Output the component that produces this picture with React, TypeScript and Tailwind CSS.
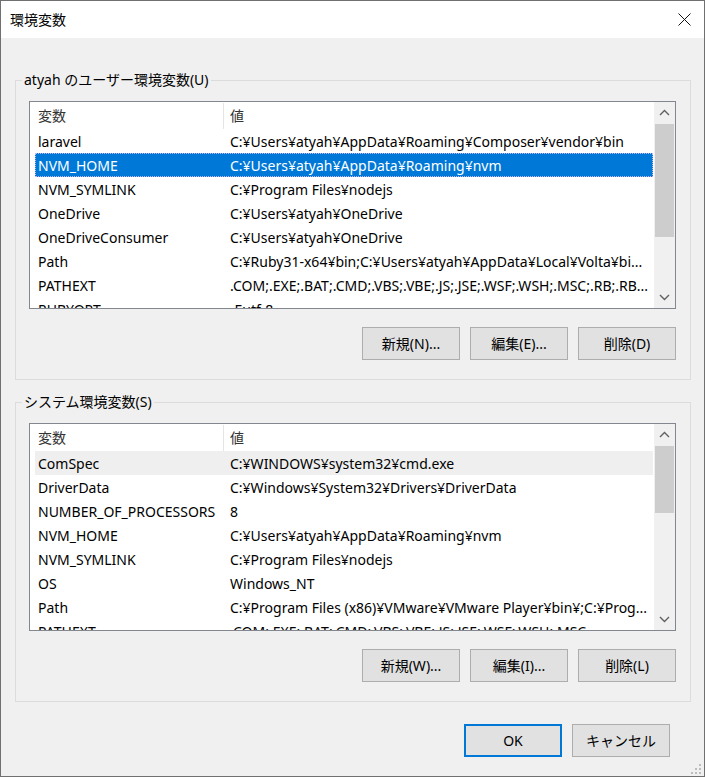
type Row = { name: string; value: string; state?: "selected" | "inactive" };

const userRows: Row[] = [
  { name: "laravel", value: "C:¥Users¥atyah¥AppData¥Roaming¥Composer¥vendor¥bin" },
  { name: "NVM_HOME", value: "C:¥Users¥atyah¥AppData¥Roaming¥nvm", state: "selected" },
  { name: "NVM_SYMLINK", value: "C:¥Program Files¥nodejs" },
  { name: "OneDrive", value: "C:¥Users¥atyah¥OneDrive" },
  { name: "OneDriveConsumer", value: "C:¥Users¥atyah¥OneDrive" },
  { name: "Path", value: "C:¥Ruby31-x64¥bin;C:¥Users¥atyah¥AppData¥Local¥Volta¥bi..." },
  { name: "PATHEXT", value: ".COM;.EXE;.BAT;.CMD;.VBS;.VBE;.JS;.JSE;.WSF;.WSH;.MSC;.RB;.RB..." },
  { name: "RUBYOPT", value: "-Eutf-8" },
];

const systemRows: Row[] = [
  { name: "ComSpec", value: "C:¥WINDOWS¥system32¥cmd.exe", state: "inactive" },
  { name: "DriverData", value: "C:¥Windows¥System32¥Drivers¥DriverData" },
  { name: "NUMBER_OF_PROCESSORS", value: "8" },
  { name: "NVM_HOME", value: "C:¥Users¥atyah¥AppData¥Roaming¥nvm" },
  { name: "NVM_SYMLINK", value: "C:¥Program Files¥nodejs" },
  { name: "OS", value: "Windows_NT" },
  { name: "Path", value: "C:¥Program Files (x86)¥VMware¥VMware Player¥bin¥;C:¥Prog..." },
  { name: "PATHEXT", value: ".COM;.EXE;.BAT;.CMD;.VBS;.VBE;.JS;.JSE;.WSF;.WSH;.MSC" },
];

function Chevron({ up }: { up?: boolean }) {
  return (
    <svg width="11" height="7" viewBox="0 0 11 7" fill="none">
      <polyline
        points={up ? "1,6 5.5,1.5 10,6" : "1,1 5.5,5.5 10,1"}
        stroke="#606060"
        strokeWidth="1.4"
      />
    </svg>
  );
}

function ScrollBar({ thumbClass }: { thumbClass: string }) {
  return (
    <div className="flex w-[21px] shrink-0 flex-col bg-[#f0f0f0]">
      <div className="flex h-[21px] shrink-0 items-center justify-center">
        <Chevron up />
      </div>
      <div className="flex-1">
        <div className={thumbClass} />
      </div>
      <div className="flex h-[21px] shrink-0 items-center justify-center">
        <Chevron />
      </div>
    </div>
  );
}

function ListRow({ row }: { row: Row }) {
  const base =
    row.state === "selected"
      ? "flex h-[24px] shrink-0 items-center bg-[#0078d7] text-white outline outline-1 outline-dotted outline-[#c8b8f0] -outline-offset-1"
      : row.state === "inactive"
        ? "flex h-[24px] shrink-0 items-center bg-[#efefef] text-black"
        : "flex h-[24px] shrink-0 items-center text-black";
  return (
    <div className={base}>
      <div className="w-[192px] shrink-0 overflow-hidden whitespace-nowrap pl-[3px]">{row.name}</div>
      <div className="min-w-0 flex-1 overflow-hidden whitespace-nowrap pl-[3px]">{row.value}</div>
    </div>
  );
}

function VarList({ rows, thumbClass }: { rows: Row[]; thumbClass: string }) {
  return (
    <div className="flex h-[208px] w-[647px] border border-[#828790] bg-white">
      <div className="flex min-w-0 flex-1 flex-col overflow-hidden">
        <div className="flex h-[27px] shrink-0 items-center text-[#333]">
          <div className="flex h-[26px] w-[194px] shrink-0 items-center border-r border-[#e5e5e5] pl-[8px]">
            変数
          </div>
          <div className="pl-[6px]">値</div>
        </div>
        <div className="flex flex-col pl-[5px] pr-[1px]">
          {rows.map((r) => (
            <ListRow key={r.name} row={r} />
          ))}
        </div>
      </div>
      <ScrollBar thumbClass={thumbClass} />
    </div>
  );
}

function Button({ label, primary }: { label: string; primary?: boolean }) {
  return (
    <button
      type="button"
      className={
        primary
          ? "flex h-[33px] w-[98px] items-center justify-center border-2 border-[#0078d7] bg-[#e1e1e1] text-black"
          : "flex h-[33px] w-[98px] items-center justify-center border border-[#adadad] bg-[#e1e1e1] text-black"
      }
    >
      {label}
    </button>
  );
}

function Group({
  title,
  rows,
  thumbClass,
  buttons,
}: {
  title: string;
  rows: Row[];
  thumbClass: string;
  buttons: string[];
}) {
  return (
    <fieldset className="w-[676px] border border-[#dcdcdc]">
      <legend className="ml-[6px] px-[2px] leading-[20px]">{title}</legend>
      <div className="flex flex-col items-end pb-[19px] pl-[13px] pr-[14px] pt-[11px]">
        <VarList rows={rows} thumbClass={thumbClass} />
        <div className="mt-[18px] flex gap-[10px]">
          {buttons.map((b) => (
            <Button key={b} label={b} />
          ))}
        </div>
      </div>
    </fieldset>
  );
}

function ResizeGrip() {
  const dots = [
    [10, 2],
    [6, 6],
    [10, 6],
    [2, 10],
    [6, 10],
    [10, 10],
  ];
  return (
    <svg width="13" height="13" viewBox="0 0 13 13" className="absolute bottom-[1px] right-[2px]">
      {dots.map(([x, y]) => (
        <rect key={`${x}-${y}`} x={x} y={y} width="2" height="2" fill="#bdbdbd" />
      ))}
    </svg>
  );
}

export default function App() {
  return (
    <div className="relative flex h-[777px] w-[705px] flex-col border border-[#707070] bg-[#f0f0f0] font-['Noto_Sans','Noto_Sans_CJK_JP',sans-serif] text-[14px] text-black">
      <div className="flex h-[37px] shrink-0 items-center justify-between bg-white pl-[9px] pr-[13px]">
        <span>環境変数</span>
        <svg width="13" height="13" viewBox="0 0 13 13" fill="none">
          <path d="M0.5 0.5L12.5 12.5M12.5 0.5L0.5 12.5" stroke="#111" strokeWidth="1" />
        </svg>
      </div>

      <div className="flex flex-col pl-[14px] pt-[32px]">
        <Group
          title="atyah のユーザー環境変数(U)"
          rows={userRows}
          thumbClass="mx-[1px] mt-[1px] h-[113px] bg-[#cdcdcd]"
          buttons={["新規(N)...", "編集(E)...", "削除(D)"]}
        />
        <div className="mt-[12px]">
          <Group
            title="システム環境変数(S)"
            rows={systemRows}
            thumbClass="mx-[1px] mt-[1px] h-[67px] bg-[#cdcdcd]"
            buttons={["新規(W)...", "編集(I)...", "削除(L)"]}
          />
        </div>
      </div>

      <div className="flex justify-end gap-[10px] pr-[34px] pt-[22px]">
        <Button label="OK" primary />
        <Button label="キャンセル" />
      </div>

      <ResizeGrip />
    </div>
  );
}
